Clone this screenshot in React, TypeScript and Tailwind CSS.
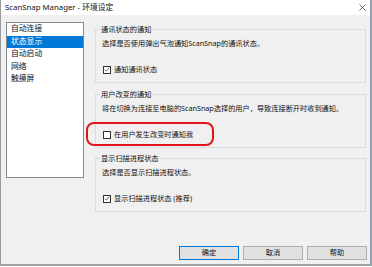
const font = { fontFamily: '"Noto Sans", "Noto Sans CJK SC", sans-serif' };

const items = ["自动连接", "状态显示", "自动启动", "网络", "触摸屏"];

function CheckBox({ checked }: { checked?: boolean }) {
  return (
    <span className="flex h-[8px] w-[8px] shrink-0 items-center justify-center border border-[#333] bg-white">
      {checked ? (
        <svg viewBox="0 0 8 8" className="h-[7px] w-[7px]">
          <path d="M1 4.2 L3 6.2 L7 1.5" fill="none" stroke="#222" strokeWidth="0.9" />
        </svg>
      ) : null}
    </span>
  );
}

function Group({
  title,
  desc,
  label,
  checked,
  className = "",
  children,
}: {
  title: string;
  desc: string;
  label: string;
  checked?: boolean;
  className?: string;
  children?: React.ReactNode;
}) {
  return (
    <div className={`relative h-[54px] w-[271px] border border-[#dcdcdc] pl-[6px] pt-[9px] ${className}`}>
      <span className="absolute -top-[5px] left-[4px] bg-[#f0f0f0] px-[1px] leading-[9px]">{title}</span>
      <div className="h-[9px] leading-[9px] whitespace-nowrap">{desc}</div>
      <div className="ml-[1px] mt-[17px] flex h-[9px] items-center gap-[3px] leading-[9px]">
        <CheckBox checked={checked} />
        <span className="whitespace-nowrap">{label}</span>
      </div>
      {children}
    </div>
  );
}

export default function App() {
  return (
    <div className="h-[267px] w-[372px] bg-white text-[7.2px] text-[#111]" style={font}>
      <div className="flex h-[266px] flex-col border-b-2 border-l border-r-2 border-b-[#a3a3a3] border-l-[#9a9a9a] border-r-[#8fa3ab]">
        <div className="flex h-[15px] shrink-0 items-center justify-between bg-white pl-[4px] pr-[4px]">
          <span className="text-[7.8px] leading-none text-[#111]">ScanSnap Manager - 环境设定</span>
          <svg viewBox="0 0 8 8" className="h-[7px] w-[7px]">
            <path d="M0.5 0.5 L7.5 7.5 M7.5 0.5 L0.5 7.5" stroke="#333" strokeWidth="0.8" />
          </svg>
        </div>

        <div className="flex flex-1 flex-col bg-[#f0f0f0]">
          <div className="flex items-start pl-[5px]">
            <div className="mt-[7px] h-[156px] w-[78px] border border-[#828790] bg-white text-[7.8px]">
              {items.map((t, i) => (
                <div
                  key={t}
                  className={`flex h-[12.5px] items-center pl-[4px] ${i === 1 ? "bg-[#0078d7] text-white" : ""}`}
                >
                  {t}
                </div>
              ))}
            </div>

            <div className="ml-[11px] mt-[14px] flex flex-col">
              <Group
                title="通讯状态的通知"
                desc="选择是否使用弹出气泡通知ScanSnap的通讯状态。"
                label="通知通讯状态"
                checked
              />
              <Group
                title="用户改变的通知"
                desc="将在切换为连接至电脑的ScanSnap选择的用户，导致连接断开时收到通知。"
                label="在用户发生改变时通知我"
                className="mt-[11px]"
              >
                <div className="absolute left-[-10px] top-[27px] h-[24px] w-[128px] rounded-[8px] border-2 border-[#e0161d]" />
              </Group>
              <Group
                title="显示扫描进程状态"
                desc="选择是否显示扫描进程状态。"
                label="显示扫描进程状态 (推荐)"
                checked
                className="mt-[10px]"
              />
            </div>
          </div>

          <div className="mt-auto flex justify-end gap-[4px] pb-[4px] pr-[3px]">
            <button className="h-[14px] w-[60px] border border-[#0078d7] bg-[#e1e1e1] leading-none">确定</button>
            <button className="h-[14px] w-[60px] border border-[#adadad] bg-[#e1e1e1] leading-none">取消</button>
            <button className="h-[14px] w-[60px] border border-[#adadad] bg-[#e1e1e1] leading-none">帮助</button>
          </div>
        </div>
      </div>
    </div>
  );
}
